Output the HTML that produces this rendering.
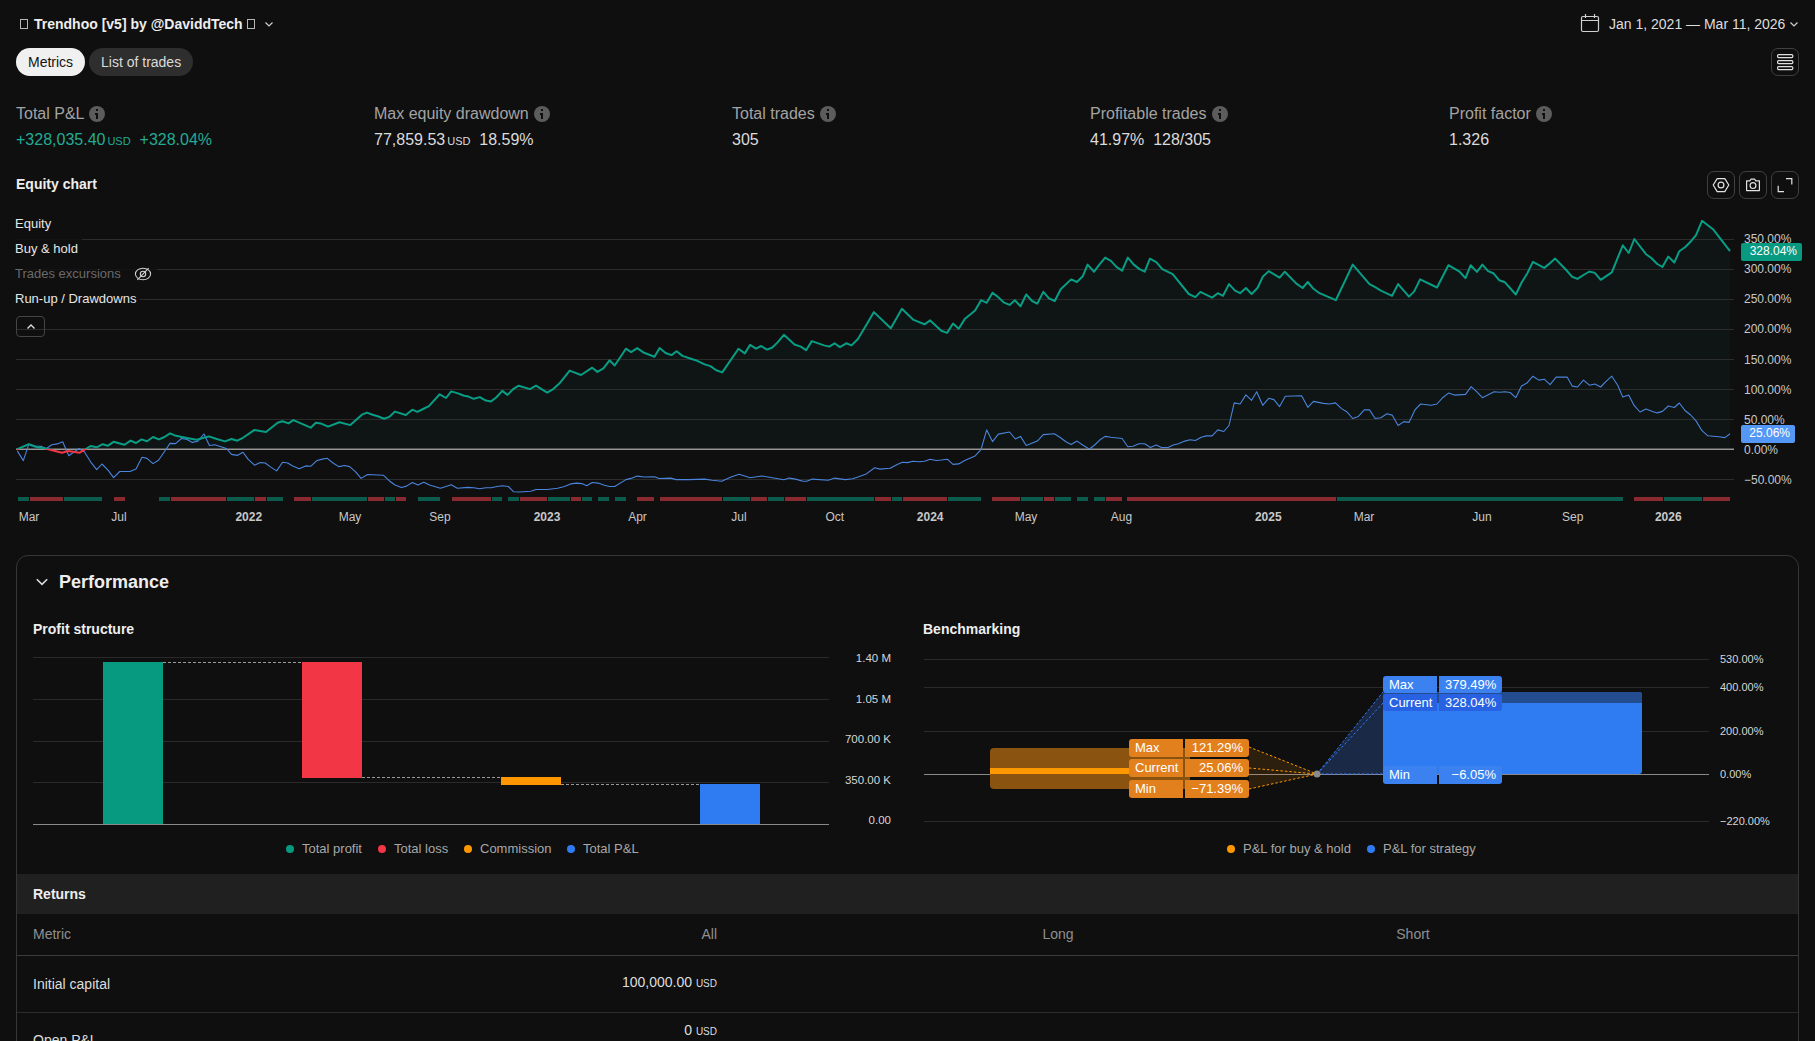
<!DOCTYPE html>
<html><head><meta charset="utf-8">
<style>
html,body{margin:0;padding:0;background:#0f0f0f;width:1815px;height:1041px;overflow:hidden;font-family:"Liberation Sans",sans-serif;color:#dbdbdb;}
.a{position:absolute;white-space:nowrap;}
.title{left:20px;top:16px;font-size:14px;font-weight:700;color:#eeeeee;}
.tofu{display:inline-block;width:8px;height:10px;border:1px solid #b5b5b5;box-sizing:border-box;vertical-align:0px;}
.pill{position:absolute;white-space:nowrap;top:48px;height:28px;border-radius:14px;font-size:14px;line-height:28px;box-sizing:border-box;padding:0 12px;}
.mlabel{font-size:16px;color:#a3a3a3;}
.mval{font-size:16px;color:#dbdbdb;}
.usd{font-size:11px;}
.info{display:inline-block;width:16px;height:16px;border-radius:50%;background:#5c5c5c;vertical-align:-3px;margin-left:5px;position:relative;}
.info:before{content:"";position:absolute;left:7px;top:3px;width:2px;height:2px;background:#0f0f0f;box-shadow:-1px 4px 0 0 #0f0f0f;}
.info:after{content:"";position:absolute;left:7px;top:7px;width:2px;height:6px;background:#0f0f0f;}
.ibtn{position:absolute;top:171px;width:28px;height:28px;border:1px solid #404040;border-radius:7px;box-sizing:border-box;}
.ax{font-size:12px;color:#c8c8c8;}
.leg{font-size:13px;color:#e6e6e6;}
</style></head><body>
<!-- header -->
<div class="a title"><span class="tofu"></span><span style="margin-left:6px">Trendhoo [v5] by @DaviddTech</span><span class="tofu" style="margin-left:4px"></span></div>
<svg class="a" style="left:264px;top:20px" width="10" height="8"><path d="M1.5 2.5 L5 6 L8.5 2.5" stroke="#cfcfcf" stroke-width="1.2" fill="none"/></svg>

<svg class="a" style="left:1580px;top:13px" width="20" height="20"><rect x="1.5" y="3.5" width="17" height="15" rx="1.5" stroke="#d0d0d0" stroke-width="1.2" fill="none"/><path d="M1.5 7.5H18.5M5.5 1v4M14.5 1v4" stroke="#d0d0d0" stroke-width="1.2"/></svg>
<div class="a" style="left:1609px;top:16px;font-size:14px;color:#dedede">Jan 1, 2021 — Mar 11, 2026</div>
<svg class="a" style="left:1789px;top:20px" width="10" height="8"><path d="M1.5 2.5 L5 6 L8.5 2.5" stroke="#cfcfcf" stroke-width="1.2" fill="none"/></svg>

<div class="pill" style="left:16px;width:69px;background:#f0f0f0;color:#131313">Metrics</div>
<div class="pill" style="left:89px;width:104px;background:#2e2e2e;color:#dbdbdb">List of trades</div>
<div class="a" style="left:1771px;top:48px;width:28px;height:28px;border:1px solid #404040;border-radius:7px;box-sizing:border-box"></div>
<svg class="a" style="left:1775px;top:52px" width="20" height="20"><g stroke="#e0e0e0" stroke-width="1.2" fill="none"><rect x="2.6" y="2.6" width="15.2" height="3" rx="1"/><rect x="2.6" y="8.6" width="15.2" height="3" rx="1"/><rect x="2.6" y="14.6" width="15.2" height="3" rx="1"/></g></svg>

<!-- metrics -->
<div class="a mlabel" style="left:16px;top:105px">Total P&amp;L<span class="info"></span></div>
<div class="a mval" style="left:16px;top:131px;color:#22ab94">+328,035.40<span class="usd" style="margin-left:2px">USD</span>&nbsp; +328.04%</div>
<div class="a mlabel" style="left:374px;top:105px">Max equity drawdown<span class="info"></span></div>
<div class="a mval" style="left:374px;top:131px">77,859.53<span class="usd" style="margin-left:2px">USD</span>&nbsp; 18.59%</div>
<div class="a mlabel" style="left:732px;top:105px">Total trades<span class="info"></span></div>
<div class="a mval" style="left:732px;top:131px">305</div>
<div class="a mlabel" style="left:1090px;top:105px">Profitable trades<span class="info"></span></div>
<div class="a mval" style="left:1090px;top:131px">41.97%&nbsp; 128/305</div>
<div class="a mlabel" style="left:1449px;top:105px">Profit factor<span class="info"></span></div>
<div class="a mval" style="left:1449px;top:131px">1.326</div>

<!-- equity chart -->
<div class="a" style="left:16px;top:176px;font-size:14px;font-weight:700;color:#eeeeee">Equity chart</div>
<div class="ibtn" style="left:1707px"></div>
<div class="ibtn" style="left:1739px"></div>
<div class="ibtn" style="left:1771px"></div>
<svg class="a" style="left:1707px;top:171px" width="96" height="28"><g stroke="#e2e2e2" stroke-width="1.2" fill="none">
<path d="M10.2 7.6 H17.8 L21.8 14 L17.8 20.6 H10.2 L6.2 14 Z" stroke-linejoin="round"/><circle cx="14" cy="14" r="2.9"/>
<path d="M39.6 9.8 H42.8 L44 8.2 H47.6 L48.8 9.8 H52.4 V19.6 H39.6 Z" stroke-linejoin="round"/><circle cx="46" cy="14.6" r="2.9"/>
<path d="M79 7.6 H84.8 V13.4 M71.2 14.8 V20.6 H77"/></g></svg>

<!--CHART-->
<svg class="a" style="left:0;top:0" width="1815" height="540">
<path d="M16.7 449.5 L28.8 444.2 L35.5 446.7 L45.2 448.5 L62.0 452.7 L68.0 451.0 L79.7 452.7 L85.8 449.0 L90.6 446.0 L96.7 447.3 L102.7 444.2 L107.6 445.8 L113.6 441.8 L124.5 444.8 L130.6 440.6 L136.0 443.0 L141.5 439.4 L147.0 441.2 L153.0 437.0 L159.0 439.4 L164.5 437.0 L170.0 433.3 L176.0 435.8 L182.0 437.0 L188.2 438.2 L196.7 439.8 L208.8 436.4 L216.0 438.8 L225.0 441.4 L231.5 439.0 L237.2 440.7 L243.0 437.8 L254.5 429.9 L266.0 432.0 L277.6 422.7 L282.6 421.2 L288.4 423.4 L293.4 420.2 L310.7 427.7 L315.8 422.7 L320.8 423.4 L328.0 426.6 L339.5 422.2 L350.3 425.1 L361.9 414.7 L366.9 412.6 L372.7 414.7 L377.7 416.2 L384.2 418.8 L389.2 416.9 L395.0 411.6 L405.8 415.0 L412.3 409.7 L417.3 411.9 L423.1 409.0 L428.9 406.1 L439.7 394.3 L446.0 398.0 L451.2 391.4 L457.3 393.1 L464.2 395.7 L468.5 396.6 L473.7 398.8 L479.8 397.1 L485.8 400.6 L491.0 401.4 L496.2 397.5 L502.3 390.9 L507.5 394.9 L513.5 388.8 L518.7 385.7 L529.9 389.1 L536.0 385.7 L547.2 392.6 L552.4 389.7 L559.3 383.6 L569.7 370.6 L581.0 375.0 L592.2 367.7 L597.4 371.9 L603.4 368.4 L609.5 360.3 L614.7 365.5 L625.9 348.7 L631.1 352.1 L637.2 348.2 L644.1 352.8 L654.5 356.8 L659.6 348.1 L665.6 353.0 L671.5 355.1 L676.6 351.3 L682.5 355.9 L690.9 358.7 L697.3 360.8 L704.7 364.4 L710.4 366.1 L716.3 370.3 L722.2 372.4 L738.5 348.7 L744.8 353.4 L750.1 344.9 L756.0 348.7 L761.1 346.0 L767.0 349.6 L772.3 347.5 L777.6 342.4 L783.9 334.8 L794.5 344.5 L800.8 346.6 L806.1 350.2 L811.8 341.1 L824.1 345.4 L829.3 346.6 L834.6 343.3 L839.9 347.1 L846.3 343.3 L851.5 345.4 L857.9 339.0 L866.3 324.9 L873.9 312.1 L890.8 328.2 L901.9 308.8 L913.6 319.9 L924.5 324.3 L930.2 320.4 L941.3 330.8 L947.1 332.9 L953.0 323.5 L958.7 328.7 L964.7 319.1 L975.1 310.6 L981.0 300.2 L986.7 302.8 L992.5 292.7 L997.6 296.6 L1003.6 302.3 L1009.6 304.9 L1014.8 300.2 L1020.5 306.2 L1026.2 294.5 L1032.1 301.0 L1037.3 303.6 L1043.3 291.9 L1049.0 298.4 L1054.7 301.0 L1060.7 289.3 L1071.1 279.4 L1077.0 282.0 L1082.7 276.3 L1087.6 264.6 L1094.1 271.7 L1099.3 264.6 L1105.2 257.6 L1110.9 260.8 L1116.7 267.2 L1122.1 270.6 L1127.8 257.6 L1133.8 264.6 L1139.5 269.1 L1144.7 271.7 L1149.9 258.7 L1156.3 262.1 L1162.3 269.1 L1172.7 274.2 L1188.8 294.0 L1195.3 297.1 L1200.4 291.9 L1212.1 297.6 L1217.8 293.2 L1223.0 295.8 L1229.0 284.1 L1235.0 290.6 L1240.1 293.2 L1245.9 288.0 L1251.6 294.0 L1257.5 288.0 L1262.7 276.8 L1268.7 271.1 L1279.6 277.6 L1284.8 271.7 L1296.4 283.6 L1302.6 288.0 L1307.8 282.0 L1313.5 288.8 L1319.5 293.2 L1335.8 300.2 L1352.7 264.6 L1369.5 284.1 L1375.2 287.2 L1380.9 290.6 L1392.1 295.8 L1398.1 284.1 L1409.0 296.6 L1414.2 291.4 L1420.1 279.4 L1437.0 287.5 L1448.4 265.2 L1459.6 271.7 L1465.5 278.1 L1470.7 265.2 L1476.9 271.9 L1482.4 264.6 L1488.1 271.1 L1493.3 273.2 L1499.2 280.2 L1505.0 282.3 L1515.8 294.5 L1521.5 282.8 L1527.5 272.9 L1532.9 261.9 L1544.2 267.9 L1550.1 263.1 L1555.2 258.6 L1566.2 270.0 L1572.2 276.8 L1577.5 278.9 L1583.5 275.0 L1589.4 271.5 L1594.8 272.9 L1600.7 279.8 L1611.8 272.3 L1622.8 245.3 L1628.7 253.0 L1634.3 239.0 L1646.0 254.2 L1651.3 258.0 L1657.3 264.0 L1662.4 267.0 L1668.3 256.6 L1674.3 262.5 L1679.3 251.2 L1685.3 247.0 L1690.0 242.3 L1696.0 235.1 L1702.0 220.8 L1713.0 229.2 L1730.0 251.2 L1730.0 449.0 L16.7 449.0 Z" fill="rgba(34,171,148,0.045)"/>
<rect x="16" y="239" width="1718" height="1" fill="#2c2c2c"/>
<rect x="16" y="269" width="1718" height="1" fill="#2c2c2c"/>
<rect x="16" y="299" width="1718" height="1" fill="#2c2c2c"/>
<rect x="16" y="329" width="1718" height="1" fill="#2c2c2c"/>
<rect x="16" y="359" width="1718" height="1" fill="#2c2c2c"/>
<rect x="16" y="389" width="1718" height="1" fill="#2c2c2c"/>
<rect x="16" y="419" width="1718" height="1" fill="#2c2c2c"/>
<rect x="16" y="479" width="1718" height="1" fill="#2c2c2c"/>
<rect x="16" y="448" width="1718" height="1" fill="#505050"/><rect x="16" y="449" width="1718" height="1" fill="#979797"/>
<rect x="18" y="497" width="11" height="4" fill="#0c5c4e"/>
<rect x="30" y="497" width="33" height="4" fill="#8a2a30"/>
<rect x="64" y="497" width="38" height="4" fill="#0c5c4e"/>
<rect x="114" y="497" width="11" height="4" fill="#8a2a30"/>
<rect x="159" y="497" width="11" height="4" fill="#0c5c4e"/>
<rect x="171" y="497" width="55" height="4" fill="#8a2a30"/>
<rect x="227" y="497" width="27" height="4" fill="#0c5c4e"/>
<rect x="255" y="497" width="11" height="4" fill="#8a2a30"/>
<rect x="267" y="497" width="16" height="4" fill="#0c5c4e"/>
<rect x="294" y="497" width="17" height="4" fill="#8a2a30"/>
<rect x="312" y="497" width="55" height="4" fill="#0c5c4e"/>
<rect x="368" y="497" width="16" height="4" fill="#8a2a30"/>
<rect x="385" y="497" width="10" height="4" fill="#0c5c4e"/>
<rect x="396" y="497" width="10" height="4" fill="#8a2a30"/>
<rect x="418" y="497" width="22" height="4" fill="#0c5c4e"/>
<rect x="452" y="497" width="39" height="4" fill="#8a2a30"/>
<rect x="492" y="497" width="10" height="4" fill="#0c5c4e"/>
<rect x="508" y="497" width="11" height="4" fill="#0c5c4e"/>
<rect x="520" y="497" width="27" height="4" fill="#8a2a30"/>
<rect x="548" y="497" width="22" height="4" fill="#0c5c4e"/>
<rect x="571" y="497" width="10" height="4" fill="#8a2a30"/>
<rect x="582" y="497" width="10" height="4" fill="#0c5c4e"/>
<rect x="598" y="497" width="11" height="4" fill="#0c5c4e"/>
<rect x="615" y="497" width="11" height="4" fill="#0c5c4e"/>
<rect x="637" y="497" width="17" height="4" fill="#8a2a30"/>
<rect x="660" y="497" width="62" height="4" fill="#8a2a30"/>
<rect x="723" y="497" width="27" height="4" fill="#0c5c4e"/>
<rect x="751" y="497" width="16" height="4" fill="#8a2a30"/>
<rect x="768" y="497" width="16" height="4" fill="#0c5c4e"/>
<rect x="785" y="497" width="21" height="4" fill="#8a2a30"/>
<rect x="807" y="497" width="67" height="4" fill="#0c5c4e"/>
<rect x="875" y="497" width="16" height="4" fill="#8a2a30"/>
<rect x="892" y="497" width="10" height="4" fill="#0c5c4e"/>
<rect x="903" y="497" width="44" height="4" fill="#8a2a30"/>
<rect x="948" y="497" width="33" height="4" fill="#0c5c4e"/>
<rect x="992" y="497" width="28" height="4" fill="#8a2a30"/>
<rect x="1021" y="497" width="22" height="4" fill="#0c5c4e"/>
<rect x="1044" y="497" width="10" height="4" fill="#8a2a30"/>
<rect x="1055" y="497" width="16" height="4" fill="#0c5c4e"/>
<rect x="1077" y="497" width="11" height="4" fill="#0c5c4e"/>
<rect x="1094" y="497" width="11" height="4" fill="#0c5c4e"/>
<rect x="1106" y="497" width="16" height="4" fill="#8a2a30"/>
<rect x="1127" y="497" width="209" height="4" fill="#8a2a30"/>
<rect x="1337" y="497" width="286" height="4" fill="#0c5c4e"/>
<rect x="1634" y="497" width="29" height="4" fill="#8a2a30"/>
<rect x="1664" y="497" width="38" height="4" fill="#0c5c4e"/>
<rect x="1703" y="497" width="27" height="4" fill="#8a2a30"/>
<path d="M17.3 450.9 L23.3 460.6 L28.8 444.2 L35.5 446.0 L41.5 446.4 L46.4 448.5 L51.8 444.8 L57.3 443.9 L62.7 441.8 L68.8 455.8 L79.0 448.5 L84.5 452.0 L90.6 461.8 L96.7 469.7 L102.0 464.0 L108.2 470.3 L113.6 477.6 L119.7 471.5 L130.0 471.5 L136.0 469.0 L142.0 457.2 L147.0 458.4 L153.0 463.6 L158.5 460.2 L164.5 451.5 L170.0 443.4 L175.5 443.6 L181.5 438.5 L187.0 439.4 L192.4 442.4 L198.0 441.2 L204.0 434.0 L209.4 445.5 L214.8 444.8 L221.0 446.7 L226.4 448.5 L231.5 454.4 L237.2 455.4 L243.0 452.2 L248.0 459.1 L254.5 465.2 L260.3 462.6 L265.3 463.0 L270.4 466.9 L276.6 470.9 L282.6 462.3 L287.7 463.0 L292.7 465.9 L299.2 468.8 L305.7 465.9 L310.7 466.3 L316.5 460.8 L322.2 459.1 L327.3 458.3 L333.0 463.0 L338.8 466.6 L344.6 465.5 L349.6 466.6 L355.4 471.7 L361.1 478.4 L367.6 474.5 L383.5 475.3 L389.2 480.7 L395.0 485.0 L401.5 487.5 L406.5 486.1 L412.3 482.5 L418.0 485.0 L423.8 482.2 L429.6 485.0 L440.4 488.2 L446.0 486.5 L451.2 484.8 L457.3 488.3 L467.7 487.4 L473.7 487.7 L479.8 488.8 L485.8 487.7 L491.0 487.7 L497.0 486.5 L502.3 485.7 L508.3 486.5 L513.5 491.7 L519.6 492.0 L530.8 491.2 L536.0 489.5 L547.2 489.5 L557.6 488.3 L564.5 486.5 L570.6 483.9 L576.6 483.1 L581.8 483.6 L586.7 485.7 L592.2 482.5 L598.3 483.1 L604.3 485.3 L609.5 486.5 L614.7 486.5 L625.9 479.6 L631.1 478.4 L637.2 476.1 L644.1 477.0 L654.5 476.7 L659.2 478.5 L670.8 478.1 L676.1 479.6 L688.8 479.6 L704.7 479.1 L712.1 480.2 L721.6 481.3 L731.1 477.0 L739.1 474.3 L750.1 477.7 L761.7 476.0 L772.3 477.7 L783.9 479.8 L789.2 478.1 L795.5 479.1 L802.9 481.3 L806.7 481.3 L812.4 479.1 L828.3 480.2 L834.6 478.1 L845.2 479.6 L852.6 478.7 L857.9 477.0 L866.3 473.9 L874.7 467.8 L879.9 469.1 L890.2 468.3 L897.2 464.4 L902.4 462.3 L907.6 462.6 L912.8 461.3 L919.3 461.8 L924.5 461.3 L930.2 459.2 L936.2 460.5 L941.3 460.0 L947.3 459.2 L953.0 464.4 L958.7 463.9 L964.7 460.5 L975.1 455.9 L981.0 449.6 L986.7 429.9 L992.5 441.6 L998.4 434.1 L1009.6 432.0 L1015.3 439.0 L1020.5 436.4 L1026.2 445.5 L1037.3 441.1 L1043.3 434.6 L1054.2 433.8 L1059.9 437.2 L1065.9 441.8 L1071.1 444.4 L1077.0 441.1 L1082.7 445.0 L1087.9 448.3 L1089.7 448.8 L1094.1 445.5 L1100.0 439.8 L1105.2 436.4 L1110.9 437.2 L1122.1 438.5 L1127.8 446.8 L1133.0 446.3 L1139.0 443.7 L1144.7 443.7 L1150.4 447.5 L1156.3 445.0 L1161.5 447.5 L1168.0 447.5 L1173.2 445.0 L1178.4 443.7 L1184.9 441.1 L1190.1 439.8 L1195.3 440.5 L1201.2 437.2 L1206.4 435.9 L1212.1 435.9 L1217.8 429.9 L1223.8 431.5 L1229.0 425.5 L1234.2 402.9 L1240.1 404.0 L1245.9 394.9 L1251.6 400.3 L1256.7 391.8 L1262.7 405.3 L1268.7 398.3 L1273.9 399.6 L1279.6 406.6 L1285.3 396.2 L1301.6 395.7 L1307.8 407.3 L1313.5 401.4 L1323.3 403.4 L1329.8 404.0 L1335.5 402.9 L1341.5 408.6 L1346.7 411.7 L1352.7 418.5 L1358.4 416.4 L1364.3 409.9 L1369.5 409.9 L1375.2 418.5 L1380.9 417.7 L1386.9 413.8 L1392.1 415.1 L1398.1 425.5 L1403.8 421.6 L1409.0 422.4 L1414.9 409.9 L1420.6 404.0 L1431.0 405.3 L1437.0 404.0 L1442.7 397.7 L1448.4 393.1 L1454.4 395.1 L1465.5 394.4 L1471.2 386.6 L1476.9 391.8 L1482.4 397.7 L1494.1 391.8 L1499.8 392.3 L1505.0 391.8 L1510.1 392.5 L1515.8 397.7 L1521.5 386.1 L1526.9 383.1 L1532.9 376.2 L1538.8 380.1 L1544.2 379.2 L1550.1 384.6 L1556.1 377.1 L1567.1 377.1 L1572.2 386.1 L1577.5 387.0 L1583.5 380.1 L1589.4 385.2 L1594.8 384.0 L1600.7 387.0 L1605.8 381.6 L1611.8 376.2 L1617.7 385.2 L1622.8 397.1 L1628.7 395.0 L1634.1 405.4 L1640.0 412.0 L1646.0 409.0 L1652.5 411.4 L1657.3 412.9 L1662.4 411.4 L1668.3 406.0 L1674.3 407.5 L1679.3 403.0 L1685.3 410.8 L1690.6 415.0 L1696.0 420.9 L1702.0 430.7 L1707.9 435.8 L1718.9 436.7 L1724.9 437.6 L1730.0 433.7" stroke="#4a84dc" stroke-width="1.1" fill="none" stroke-linejoin="round"/>
<defs><clipPath id="up"><rect x="0" y="0" width="1815" height="449"/></clipPath><clipPath id="dn"><rect x="0" y="449" width="1815" height="100"/></clipPath></defs>
<path d="M16.7 449.5 L28.8 444.2 L35.5 446.7 L45.2 448.5 L62.0 452.7 L68.0 451.0 L79.7 452.7 L85.8 449.0 L90.6 446.0 L96.7 447.3 L102.7 444.2 L107.6 445.8 L113.6 441.8 L124.5 444.8 L130.6 440.6 L136.0 443.0 L141.5 439.4 L147.0 441.2 L153.0 437.0 L159.0 439.4 L164.5 437.0 L170.0 433.3 L176.0 435.8 L182.0 437.0 L188.2 438.2 L196.7 439.8 L208.8 436.4 L216.0 438.8 L225.0 441.4 L231.5 439.0 L237.2 440.7 L243.0 437.8 L254.5 429.9 L266.0 432.0 L277.6 422.7 L282.6 421.2 L288.4 423.4 L293.4 420.2 L310.7 427.7 L315.8 422.7 L320.8 423.4 L328.0 426.6 L339.5 422.2 L350.3 425.1 L361.9 414.7 L366.9 412.6 L372.7 414.7 L377.7 416.2 L384.2 418.8 L389.2 416.9 L395.0 411.6 L405.8 415.0 L412.3 409.7 L417.3 411.9 L423.1 409.0 L428.9 406.1 L439.7 394.3 L446.0 398.0 L451.2 391.4 L457.3 393.1 L464.2 395.7 L468.5 396.6 L473.7 398.8 L479.8 397.1 L485.8 400.6 L491.0 401.4 L496.2 397.5 L502.3 390.9 L507.5 394.9 L513.5 388.8 L518.7 385.7 L529.9 389.1 L536.0 385.7 L547.2 392.6 L552.4 389.7 L559.3 383.6 L569.7 370.6 L581.0 375.0 L592.2 367.7 L597.4 371.9 L603.4 368.4 L609.5 360.3 L614.7 365.5 L625.9 348.7 L631.1 352.1 L637.2 348.2 L644.1 352.8 L654.5 356.8 L659.6 348.1 L665.6 353.0 L671.5 355.1 L676.6 351.3 L682.5 355.9 L690.9 358.7 L697.3 360.8 L704.7 364.4 L710.4 366.1 L716.3 370.3 L722.2 372.4 L738.5 348.7 L744.8 353.4 L750.1 344.9 L756.0 348.7 L761.1 346.0 L767.0 349.6 L772.3 347.5 L777.6 342.4 L783.9 334.8 L794.5 344.5 L800.8 346.6 L806.1 350.2 L811.8 341.1 L824.1 345.4 L829.3 346.6 L834.6 343.3 L839.9 347.1 L846.3 343.3 L851.5 345.4 L857.9 339.0 L866.3 324.9 L873.9 312.1 L890.8 328.2 L901.9 308.8 L913.6 319.9 L924.5 324.3 L930.2 320.4 L941.3 330.8 L947.1 332.9 L953.0 323.5 L958.7 328.7 L964.7 319.1 L975.1 310.6 L981.0 300.2 L986.7 302.8 L992.5 292.7 L997.6 296.6 L1003.6 302.3 L1009.6 304.9 L1014.8 300.2 L1020.5 306.2 L1026.2 294.5 L1032.1 301.0 L1037.3 303.6 L1043.3 291.9 L1049.0 298.4 L1054.7 301.0 L1060.7 289.3 L1071.1 279.4 L1077.0 282.0 L1082.7 276.3 L1087.6 264.6 L1094.1 271.7 L1099.3 264.6 L1105.2 257.6 L1110.9 260.8 L1116.7 267.2 L1122.1 270.6 L1127.8 257.6 L1133.8 264.6 L1139.5 269.1 L1144.7 271.7 L1149.9 258.7 L1156.3 262.1 L1162.3 269.1 L1172.7 274.2 L1188.8 294.0 L1195.3 297.1 L1200.4 291.9 L1212.1 297.6 L1217.8 293.2 L1223.0 295.8 L1229.0 284.1 L1235.0 290.6 L1240.1 293.2 L1245.9 288.0 L1251.6 294.0 L1257.5 288.0 L1262.7 276.8 L1268.7 271.1 L1279.6 277.6 L1284.8 271.7 L1296.4 283.6 L1302.6 288.0 L1307.8 282.0 L1313.5 288.8 L1319.5 293.2 L1335.8 300.2 L1352.7 264.6 L1369.5 284.1 L1375.2 287.2 L1380.9 290.6 L1392.1 295.8 L1398.1 284.1 L1409.0 296.6 L1414.2 291.4 L1420.1 279.4 L1437.0 287.5 L1448.4 265.2 L1459.6 271.7 L1465.5 278.1 L1470.7 265.2 L1476.9 271.9 L1482.4 264.6 L1488.1 271.1 L1493.3 273.2 L1499.2 280.2 L1505.0 282.3 L1515.8 294.5 L1521.5 282.8 L1527.5 272.9 L1532.9 261.9 L1544.2 267.9 L1550.1 263.1 L1555.2 258.6 L1566.2 270.0 L1572.2 276.8 L1577.5 278.9 L1583.5 275.0 L1589.4 271.5 L1594.8 272.9 L1600.7 279.8 L1611.8 272.3 L1622.8 245.3 L1628.7 253.0 L1634.3 239.0 L1646.0 254.2 L1651.3 258.0 L1657.3 264.0 L1662.4 267.0 L1668.3 256.6 L1674.3 262.5 L1679.3 251.2 L1685.3 247.0 L1690.0 242.3 L1696.0 235.1 L1702.0 220.8 L1713.0 229.2 L1730.0 251.2" stroke="#089e85" stroke-width="2" fill="none" stroke-linejoin="round" clip-path="url(#up)"/>
<path d="M16.7 449.5 L28.8 444.2 L35.5 446.7 L45.2 448.5 L62.0 452.7 L68.0 451.0 L79.7 452.7 L85.8 449.0 L90.6 446.0 L96.7 447.3 L102.7 444.2 L107.6 445.8 L113.6 441.8 L124.5 444.8 L130.6 440.6 L136.0 443.0 L141.5 439.4 L147.0 441.2 L153.0 437.0 L159.0 439.4 L164.5 437.0 L170.0 433.3 L176.0 435.8 L182.0 437.0 L188.2 438.2 L196.7 439.8 L208.8 436.4 L216.0 438.8 L225.0 441.4 L231.5 439.0 L237.2 440.7 L243.0 437.8 L254.5 429.9 L266.0 432.0 L277.6 422.7 L282.6 421.2 L288.4 423.4 L293.4 420.2 L310.7 427.7 L315.8 422.7 L320.8 423.4 L328.0 426.6 L339.5 422.2 L350.3 425.1 L361.9 414.7 L366.9 412.6 L372.7 414.7 L377.7 416.2 L384.2 418.8 L389.2 416.9 L395.0 411.6 L405.8 415.0 L412.3 409.7 L417.3 411.9 L423.1 409.0 L428.9 406.1 L439.7 394.3 L446.0 398.0 L451.2 391.4 L457.3 393.1 L464.2 395.7 L468.5 396.6 L473.7 398.8 L479.8 397.1 L485.8 400.6 L491.0 401.4 L496.2 397.5 L502.3 390.9 L507.5 394.9 L513.5 388.8 L518.7 385.7 L529.9 389.1 L536.0 385.7 L547.2 392.6 L552.4 389.7 L559.3 383.6 L569.7 370.6 L581.0 375.0 L592.2 367.7 L597.4 371.9 L603.4 368.4 L609.5 360.3 L614.7 365.5 L625.9 348.7 L631.1 352.1 L637.2 348.2 L644.1 352.8 L654.5 356.8 L659.6 348.1 L665.6 353.0 L671.5 355.1 L676.6 351.3 L682.5 355.9 L690.9 358.7 L697.3 360.8 L704.7 364.4 L710.4 366.1 L716.3 370.3 L722.2 372.4 L738.5 348.7 L744.8 353.4 L750.1 344.9 L756.0 348.7 L761.1 346.0 L767.0 349.6 L772.3 347.5 L777.6 342.4 L783.9 334.8 L794.5 344.5 L800.8 346.6 L806.1 350.2 L811.8 341.1 L824.1 345.4 L829.3 346.6 L834.6 343.3 L839.9 347.1 L846.3 343.3 L851.5 345.4 L857.9 339.0 L866.3 324.9 L873.9 312.1 L890.8 328.2 L901.9 308.8 L913.6 319.9 L924.5 324.3 L930.2 320.4 L941.3 330.8 L947.1 332.9 L953.0 323.5 L958.7 328.7 L964.7 319.1 L975.1 310.6 L981.0 300.2 L986.7 302.8 L992.5 292.7 L997.6 296.6 L1003.6 302.3 L1009.6 304.9 L1014.8 300.2 L1020.5 306.2 L1026.2 294.5 L1032.1 301.0 L1037.3 303.6 L1043.3 291.9 L1049.0 298.4 L1054.7 301.0 L1060.7 289.3 L1071.1 279.4 L1077.0 282.0 L1082.7 276.3 L1087.6 264.6 L1094.1 271.7 L1099.3 264.6 L1105.2 257.6 L1110.9 260.8 L1116.7 267.2 L1122.1 270.6 L1127.8 257.6 L1133.8 264.6 L1139.5 269.1 L1144.7 271.7 L1149.9 258.7 L1156.3 262.1 L1162.3 269.1 L1172.7 274.2 L1188.8 294.0 L1195.3 297.1 L1200.4 291.9 L1212.1 297.6 L1217.8 293.2 L1223.0 295.8 L1229.0 284.1 L1235.0 290.6 L1240.1 293.2 L1245.9 288.0 L1251.6 294.0 L1257.5 288.0 L1262.7 276.8 L1268.7 271.1 L1279.6 277.6 L1284.8 271.7 L1296.4 283.6 L1302.6 288.0 L1307.8 282.0 L1313.5 288.8 L1319.5 293.2 L1335.8 300.2 L1352.7 264.6 L1369.5 284.1 L1375.2 287.2 L1380.9 290.6 L1392.1 295.8 L1398.1 284.1 L1409.0 296.6 L1414.2 291.4 L1420.1 279.4 L1437.0 287.5 L1448.4 265.2 L1459.6 271.7 L1465.5 278.1 L1470.7 265.2 L1476.9 271.9 L1482.4 264.6 L1488.1 271.1 L1493.3 273.2 L1499.2 280.2 L1505.0 282.3 L1515.8 294.5 L1521.5 282.8 L1527.5 272.9 L1532.9 261.9 L1544.2 267.9 L1550.1 263.1 L1555.2 258.6 L1566.2 270.0 L1572.2 276.8 L1577.5 278.9 L1583.5 275.0 L1589.4 271.5 L1594.8 272.9 L1600.7 279.8 L1611.8 272.3 L1622.8 245.3 L1628.7 253.0 L1634.3 239.0 L1646.0 254.2 L1651.3 258.0 L1657.3 264.0 L1662.4 267.0 L1668.3 256.6 L1674.3 262.5 L1679.3 251.2 L1685.3 247.0 L1690.0 242.3 L1696.0 235.1 L1702.0 220.8 L1713.0 229.2 L1730.0 251.2" stroke="#f23645" stroke-width="2" fill="none" stroke-linejoin="round" clip-path="url(#dn)"/>
</svg>
<div class="a ax" style="left:1744px;top:232.00px;line-height:14px">350.00%</div>
<div class="a ax" style="left:1744px;top:262.14px;line-height:14px">300.00%</div>
<div class="a ax" style="left:1744px;top:292.28px;line-height:14px">250.00%</div>
<div class="a ax" style="left:1744px;top:322.42px;line-height:14px">200.00%</div>
<div class="a ax" style="left:1744px;top:352.56px;line-height:14px">150.00%</div>
<div class="a ax" style="left:1744px;top:382.70px;line-height:14px">100.00%</div>
<div class="a ax" style="left:1744px;top:412.84px;line-height:14px">50.00%</div>
<div class="a ax" style="left:1744px;top:442.98px;line-height:14px">0.00%</div>
<div class="a ax" style="left:1744px;top:473.12px;line-height:14px">−50.00%</div>
<div class="a" style="left:1741px;top:243px;width:61px;height:18px;background:#089981;border-radius:2px;color:#fff;font-size:12px;line-height:16.5px;text-align:right;box-sizing:border-box;padding-right:5px">328.04%</div>
<div class="a" style="left:1741px;top:425px;width:54px;height:18px;background:#5597f5;border-radius:2px;color:#fff;font-size:12px;line-height:16.5px;text-align:right;box-sizing:border-box;padding-right:5px">25.06%</div>
<div class="a ax" style="left:-11px;width:80px;text-align:center;top:510px;line-height:14px;font-weight:400">Mar</div>
<div class="a ax" style="left:79px;width:80px;text-align:center;top:510px;line-height:14px;font-weight:400">Jul</div>
<div class="a ax" style="left:208.8px;width:80px;text-align:center;top:510px;line-height:14px;font-weight:700">2022</div>
<div class="a ax" style="left:310px;width:80px;text-align:center;top:510px;line-height:14px;font-weight:400">May</div>
<div class="a ax" style="left:400px;width:80px;text-align:center;top:510px;line-height:14px;font-weight:400">Sep</div>
<div class="a ax" style="left:507px;width:80px;text-align:center;top:510px;line-height:14px;font-weight:700">2023</div>
<div class="a ax" style="left:597.5px;width:80px;text-align:center;top:510px;line-height:14px;font-weight:400">Apr</div>
<div class="a ax" style="left:699px;width:80px;text-align:center;top:510px;line-height:14px;font-weight:400">Jul</div>
<div class="a ax" style="left:794.8px;width:80px;text-align:center;top:510px;line-height:14px;font-weight:400">Oct</div>
<div class="a ax" style="left:890.2px;width:80px;text-align:center;top:510px;line-height:14px;font-weight:700">2024</div>
<div class="a ax" style="left:986px;width:80px;text-align:center;top:510px;line-height:14px;font-weight:400">May</div>
<div class="a ax" style="left:1081.5px;width:80px;text-align:center;top:510px;line-height:14px;font-weight:400">Aug</div>
<div class="a ax" style="left:1228.3px;width:80px;text-align:center;top:510px;line-height:14px;font-weight:700">2025</div>
<div class="a ax" style="left:1324px;width:80px;text-align:center;top:510px;line-height:14px;font-weight:400">Mar</div>
<div class="a ax" style="left:1442px;width:80px;text-align:center;top:510px;line-height:14px;font-weight:400">Jun</div>
<div class="a ax" style="left:1532.8px;width:80px;text-align:center;top:510px;line-height:14px;font-weight:400">Sep</div>
<div class="a ax" style="left:1628.3px;width:80px;text-align:center;top:510px;line-height:14px;font-weight:700">2026</div>
<div class="a" style="left:16px;top:211px;width:66px;height:25px;background:rgba(15,15,15,0.8)"></div>
<div class="a" style="left:16px;top:236px;width:66px;height:25px;background:rgba(15,15,15,0.8)"></div>
<div class="a" style="left:16px;top:261px;width:141px;height:25px;background:rgba(15,15,15,0.8)"></div>
<div class="a" style="left:16px;top:286px;width:124px;height:25px;background:rgba(15,15,15,0.8)"></div>
<div class="a leg" style="left:15px;top:216px;line-height:16px;color:#e6e6e6">Equity</div>
<div class="a leg" style="left:15px;top:241px;line-height:16px;color:#e6e6e6">Buy &amp; hold</div>
<div class="a leg" style="left:15px;top:266px;line-height:16px;color:#6a6a6a">Trades excursions</div>
<div class="a leg" style="left:15px;top:291px;line-height:16px;color:#e6e6e6">Run-up / Drawdowns</div>
<svg class="a" style="left:134px;top:266px" width="18" height="16"><g stroke="#cfcfcf" stroke-width="1.1" fill="none"><ellipse cx="9" cy="8" rx="7.6" ry="5.8"/><circle cx="9" cy="8" r="2.7"/><path d="M3.4 13.8 L14.6 2.2"/></g></svg>
<div class="a" style="left:16px;top:316px;width:29px;height:21px;border:1px solid #454545;border-radius:4px;box-sizing:border-box"></div>
<svg class="a" style="left:24.5px;top:322px" width="12" height="10"><path d="M2.5 6.5 L6 3 L9.5 6.5" stroke="#e0e0e0" stroke-width="1.3" fill="none"/></svg>
<!--/CHART--><!--/CHART--><!--/CHART--><!--/CHART--><!--/CHART--><!--/CHART--><!--/CHART--><!--/CHART--><!--/CHART--><!--/CHART-->

<!--PERF-->
<div class="a" style="left:16px;top:555px;width:1783px;height:600px;border:1px solid #363636;border-radius:12px;box-sizing:border-box"></div>
<svg class="a" style="left:35px;top:576px" width="14" height="12"><path d="M1.8 3.2 L7 8.4 L12.2 3.2" stroke="#dcdcdc" stroke-width="1.6" fill="none"/></svg>
<div class="a" style="left:59px;top:572px;font-size:18px;font-weight:700;color:#eeeeee;line-height:21px">Performance</div>
<div class="a" style="left:33px;top:621px;font-size:14px;font-weight:700;color:#eeeeee;line-height:16px">Profit structure</div>
<div class="a" style="left:923px;top:621px;font-size:14px;font-weight:700;color:#eeeeee;line-height:16px">Benchmarking</div>
<svg class="a" style="left:0;top:600px" width="1815" height="280">
<rect x="33" y="57" width="796" height="1" fill="#2a2a2a" />
<rect x="33" y="99" width="796" height="1" fill="#2a2a2a" />
<rect x="33" y="141" width="796" height="1" fill="#2a2a2a" />
<rect x="33" y="182" width="796" height="1" fill="#2a2a2a" />
<rect x="33" y="224" width="796" height="1" fill="#8a8a8a" />
<rect x="103" y="62" width="60" height="162" fill="#089981" />
<rect x="302" y="62" width="60" height="116" fill="#f23645" />
<rect x="501" y="177" width="60" height="8" fill="#ff9800" />
<rect x="700" y="184" width="60" height="40" fill="#2f7bf2" />
<path d="M163 62.5 H302" stroke="#9a9a9a" stroke-width="1" stroke-dasharray="3 2"/>
<path d="M362 177.5 H501" stroke="#9a9a9a" stroke-width="1" stroke-dasharray="3 2"/>
<path d="M561 184.5 H700" stroke="#9a9a9a" stroke-width="1" stroke-dasharray="3 2"/>
<rect x="924" y="59" width="785" height="1" fill="#2a2a2a" />
<rect x="924" y="87" width="785" height="1" fill="#2a2a2a" />
<rect x="924" y="131" width="785" height="1" fill="#2a2a2a" />
<rect x="924" y="221" width="785" height="1" fill="#2a2a2a" />
<rect x="924" y="174" width="785" height="1" fill="#8a8a8a" />
<rect x="990" y="148" width="200" height="41" rx="4" fill="#8a5410"/>
<rect x="990" y="168" width="140" height="6" fill="#ff9800" />
<path d="M1249 147 L1317 174 L1249 189 Z" fill="rgba(255,152,0,0.12)"/>
<path d="M1249 147 L1317 174" stroke="#ff9800" stroke-width="1" stroke-dasharray="2.5 2"/>
<path d="M1249 168 L1317 174" stroke="#ff9800" stroke-width="1" stroke-dasharray="2.5 2"/>
<path d="M1249 189 L1317 174" stroke="#ff9800" stroke-width="1" stroke-dasharray="2.5 2"/>
<path d="M1317 174 L1383 92 L1383 174 Z" fill="#1a2a46"/>
<path d="M1317 174 L1383 92" stroke="#3179f5" stroke-width="1" stroke-dasharray="2.5 2"/>
<path d="M1317 174 L1383 103" stroke="#3179f5" stroke-width="1" stroke-dasharray="2.5 2"/>
<path d="M1317 174 L1383 174" stroke="#3179f5" stroke-width="1" stroke-dasharray="2.5 2"/>
<rect x="1383" y="92" width="259" height="82" rx="3" fill="#2f7bf2"/>
<path d="M1386 92 H1639 Q1642 92 1642 95 V103 H1383 V95 Q1383 92 1386 92 Z" fill="#234d8f"/>
<circle cx="1317" cy="174" r="3.5" fill="#8a8a8a"/>
</svg>
<div class="a" style="left:791px;width:100px;text-align:right;top:651px;font-size:11.5px;line-height:14px;color:#d6d6d6">1.40 M</div>
<div class="a" style="left:791px;width:100px;text-align:right;top:692px;font-size:11.5px;line-height:14px;color:#d6d6d6">1.05 M</div>
<div class="a" style="left:791px;width:100px;text-align:right;top:732px;font-size:11.5px;line-height:14px;color:#d6d6d6">700.00 K</div>
<div class="a" style="left:791px;width:100px;text-align:right;top:773px;font-size:11.5px;line-height:14px;color:#d6d6d6">350.00 K</div>
<div class="a" style="left:791px;width:100px;text-align:right;top:813px;font-size:11.5px;line-height:14px;color:#d6d6d6">0.00</div>
<div class="a" style="left:1720px;top:652px;font-size:11px;line-height:14px;color:#d6d6d6">530.00%</div>
<div class="a" style="left:1720px;top:680px;font-size:11px;line-height:14px;color:#d6d6d6">400.00%</div>
<div class="a" style="left:1720px;top:724px;font-size:11px;line-height:14px;color:#d6d6d6">200.00%</div>
<div class="a" style="left:1720px;top:767px;font-size:11px;line-height:14px;color:#d6d6d6">0.00%</div>
<div class="a" style="left:1720px;top:814px;font-size:11px;line-height:14px;color:#d6d6d6">−220.00%</div>
<div class="a" style="left:1129px;top:739px;width:54px;height:18px;background:#e3801e;color:#fff;font-size:13px;line-height:18px;text-align:left;box-sizing:border-box;padding:0 6px;border-radius:3px 0 0 3px">Max</div>
<div class="a" style="left:1185px;top:739px;width:64px;height:18px;background:#e3801e;color:#fff;font-size:13px;line-height:18px;text-align:right;box-sizing:border-box;padding:0 6px;border-radius:0 3px 3px 0">121.29%</div>
<div class="a" style="left:1129px;top:759px;width:54px;height:18px;background:#e3801e;color:#fff;font-size:13px;line-height:18px;text-align:left;box-sizing:border-box;padding:0 6px;border-radius:3px 0 0 3px">Current</div>
<div class="a" style="left:1185px;top:759px;width:64px;height:18px;background:#e3801e;color:#fff;font-size:13px;line-height:18px;text-align:right;box-sizing:border-box;padding:0 6px;border-radius:0 3px 3px 0">25.06%</div>
<div class="a" style="left:1129px;top:780px;width:54px;height:18px;background:#e3801e;color:#fff;font-size:13px;line-height:18px;text-align:left;box-sizing:border-box;padding:0 6px;border-radius:3px 0 0 3px">Min</div>
<div class="a" style="left:1185px;top:780px;width:64px;height:18px;background:#e3801e;color:#fff;font-size:13px;line-height:18px;text-align:right;box-sizing:border-box;padding:0 6px;border-radius:0 3px 3px 0">−71.39%</div>
<div class="a" style="left:1383px;top:676px;width:54px;height:17px;background:#3b82f0;color:#fff;font-size:13px;line-height:17px;text-align:left;box-sizing:border-box;padding:0 6px;border-radius:3px 0 0 3px">Max</div>
<div class="a" style="left:1439px;top:676px;width:63px;height:17px;background:#3b82f0;color:#fff;font-size:13px;line-height:17px;text-align:right;box-sizing:border-box;padding:0 6px;border-radius:0 3px 3px 0">379.49%</div>
<div class="a" style="left:1383px;top:694px;width:54px;height:17px;background:#2862e3;color:#fff;font-size:13px;line-height:17px;text-align:left;box-sizing:border-box;padding:0 6px;border-radius:3px 0 0 3px">Current</div>
<div class="a" style="left:1439px;top:694px;width:63px;height:17px;background:#2862e3;color:#fff;font-size:13px;line-height:17px;text-align:right;box-sizing:border-box;padding:0 6px;border-radius:0 3px 3px 0">328.04%</div>
<div class="a" style="left:1383px;top:766px;width:54px;height:18px;background:#3b82f0;color:#fff;font-size:13px;line-height:18px;text-align:left;box-sizing:border-box;padding:0 6px;border-radius:3px 0 0 3px">Min</div>
<div class="a" style="left:1439px;top:766px;width:63px;height:18px;background:#3b82f0;color:#fff;font-size:13px;line-height:18px;text-align:right;box-sizing:border-box;padding:0 6px;border-radius:0 3px 3px 0">−6.05%</div>
<div class="a" style="left:286px;top:845px;width:8px;height:8px;border-radius:50%;background:#089981"></div><div class="a" style="left:302px;top:841px;font-size:13px;line-height:16px;color:#a8a8a8">Total profit</div>
<div class="a" style="left:378px;top:845px;width:8px;height:8px;border-radius:50%;background:#f23645"></div><div class="a" style="left:394px;top:841px;font-size:13px;line-height:16px;color:#a8a8a8">Total loss</div>
<div class="a" style="left:464px;top:845px;width:8px;height:8px;border-radius:50%;background:#ff9800"></div><div class="a" style="left:480px;top:841px;font-size:13px;line-height:16px;color:#a8a8a8">Commission</div>
<div class="a" style="left:567px;top:845px;width:8px;height:8px;border-radius:50%;background:#2f7bf2"></div><div class="a" style="left:583px;top:841px;font-size:13px;line-height:16px;color:#a8a8a8">Total P&amp;L</div>
<div class="a" style="left:1227px;top:845px;width:8px;height:8px;border-radius:50%;background:#ff9800"></div><div class="a" style="left:1243px;top:841px;font-size:13px;line-height:16px;color:#a8a8a8">P&amp;L for buy &amp; hold</div>
<div class="a" style="left:1367px;top:845px;width:8px;height:8px;border-radius:50%;background:#2f7bf2"></div><div class="a" style="left:1383px;top:841px;font-size:13px;line-height:16px;color:#a8a8a8">P&amp;L for strategy</div>
<div class="a" style="left:17px;top:874px;width:1781px;height:40px;background:#202020"></div>
<div class="a" style="left:33px;top:886px;font-size:14px;font-weight:700;color:#eeeeee;line-height:16px">Returns</div>
<div class="a" style="left:33px;top:926px;font-size:14px;color:#8f8f8f;line-height:16px">Metric</div>
<div class="a" style="left:617px;width:100px;text-align:right;top:926px;font-size:14px;color:#8f8f8f;line-height:16px">All</div>
<div class="a" style="left:1008px;width:100px;text-align:center;top:926px;font-size:14px;color:#8f8f8f;line-height:16px">Long</div>
<div class="a" style="left:1363px;width:100px;text-align:center;top:926px;font-size:14px;color:#8f8f8f;line-height:16px">Short</div>
<div class="a" style="left:17px;top:955px;width:1781px;height:1px;background:#3c3c3c"></div>
<div class="a" style="left:33px;top:976px;font-size:14px;color:#dedede;line-height:16px">Initial capital</div>
<div class="a" style="left:517px;width:200px;text-align:right;top:974px;font-size:14px;color:#dedede;line-height:16px">100,000.00 <span style="font-size:10px">USD</span></div>
<div class="a" style="left:17px;top:1012px;width:1781px;height:1px;background:#2c2c2c"></div>
<div class="a" style="left:33px;top:1032px;font-size:14px;color:#dedede;line-height:16px">Open P&amp;L</div>
<div class="a" style="left:517px;width:200px;text-align:right;top:1022px;font-size:14px;color:#dedede;line-height:16px">0 <span style="font-size:10px">USD</span></div>
<!--/PERF--><!--/PERF--><!--/PERF--><!--/PERF--><!--/PERF-->

</body></html>
